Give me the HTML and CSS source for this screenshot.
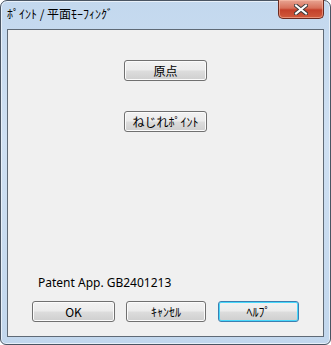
FILE: index.html
```html
<!DOCTYPE html>
<html lang="ja">
<head>
<meta charset="utf-8">
<link rel="stylesheet" href="styles.css">
</head>
<body>
<div class="window">
  <div class="titlebar">
    <span class="title">ﾎﾟｲﾝﾄ / 平面ﾓｰﾌｨﾝｸﾞ</span>
    <button class="close" aria-label="close">
      <svg width="14" height="11" viewBox="0 0 14 11">
        <path d="M2 1.5 L12 9.5 M12 1.5 L2 9.5" stroke="#3a3a3a" stroke-width="4" stroke-linecap="square"/>
        <path d="M2 1.5 L12 9.5 M12 1.5 L2 9.5" stroke="#ffffff" stroke-width="2" stroke-linecap="square"/>
      </svg>
    </button>
  </div>
  <div class="client">
    <div class="center-buttons">
      <button class="btn">原点</button>
      <button class="btn">ねじれﾎﾟｲﾝﾄ</button>
    </div>
    <div class="patent">Patent App. GB2401213</div>
    <div class="bottom-row">
      <button class="btn ok">OK</button>
      <button class="btn cancel">ｷｬﾝｾﾙ</button>
      <button class="btn default">ﾍﾙﾌﾟ</button>
    </div>
  </div>
</div>
</body>
</html>
```

FILE: styles.css
```css
html, body {
  margin: 0;
  padding: 0;
  background: #ffffff;
}

.window {
  box-sizing: border-box;
  width: 331px;
  height: 345px;
  border: 1px solid #4a5563;
  border-radius: 7px 7px 6px 6px;
  background: linear-gradient(180deg, #c3d8ee 0%, #cfe0f2 40%, #c2d7ed 100%);
  box-shadow: inset 0 0 0 1px #e8f0f9;
  display: flex;
  flex-direction: column;
  font-family: "Noto Sans CJK JP", "Noto Sans", sans-serif;
}

.titlebar {
  height: 28px;
  display: flex;
  align-items: flex-start;
  justify-content: space-between;
  padding-left: 6px;
  padding-right: 6px;
}

.title {
  font-size: 12px;
  line-height: 14px;
  margin-top: 6px;
  color: #000;
}

.close {
  width: 46px;
  height: 19px;
  margin: -1px 0 0 0;
  padding: 0;
  border: 1px solid #6b2a20;
  border-top: none;
  border-radius: 0 0 5px 5px;
  background: linear-gradient(180deg, #e8a593 0%, #d7705a 45%, #c4402a 55%, #d05a3c 100%);
  box-shadow: inset 0 0 0 1px rgba(255, 200, 180, 0.5);
  display: flex;
  align-items: center;
  justify-content: center;
}

.client {
  flex: 1;
  margin: 0 6px 7px 6px;
  border: 1px solid #5f6a76;
  background: #f0f0f0;
  display: flex;
  flex-direction: column;
  font-family: "Noto Sans", "Noto Sans CJK JP", sans-serif;
}

.center-buttons {
  flex: 1;
  display: flex;
  flex-direction: column;
  align-items: center;
  gap: 30px;
  padding-top: 30px;
}

.btn {
  box-sizing: border-box;
  width: 83px;
  height: 21px;
  padding: 0;
  border: 1px solid #707070;
  border-radius: 3px;
  background: linear-gradient(180deg, #f2f2f2 0%, #ebebeb 49%, #dddddd 51%, #cfcfcf 100%);
  box-shadow: inset 0 0 0 1px #fbfbfb;
  font-family: "Noto Sans CJK JP", "Noto Sans", sans-serif;
  font-size: 12px;
  line-height: 17px;
  color: #000;
}

.btn.default {
  border-color: #3c7fb1;
  box-shadow: inset 0 0 0 1px #48d8fb;
}

.patent {
  font-size: 12px;
  line-height: 16px;
  padding-top: 1px;
  padding-left: 30px;
  color: #000;
}

.bottom-row {
  display: flex;
  padding: 10px 0 14px 24px;
}

.bottom-row .ok {
  width: 83px;
}
.bottom-row .cancel {
  width: 80px;
  margin-left: 11px;
}
.bottom-row .default {
  width: 81px;
  margin-left: 12px;
}
```
